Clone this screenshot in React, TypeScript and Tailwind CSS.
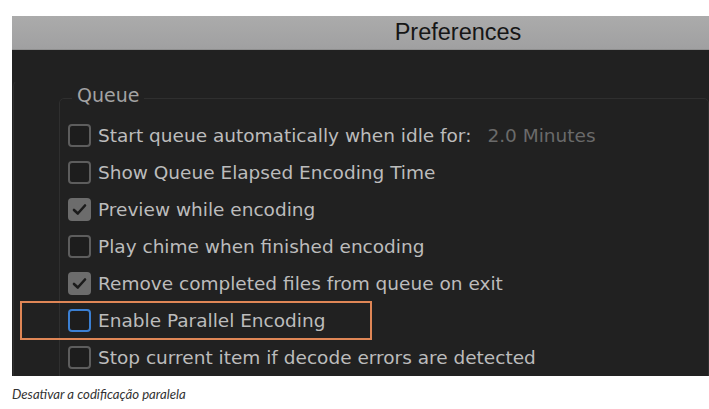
const rows = [
  { label: 'Start queue automatically when idle for:', state: 'off', extra: '2.0 Minutes' },
  { label: 'Show Queue Elapsed Encoding Time', state: 'off' },
  { label: 'Preview while encoding', state: 'on' },
  { label: 'Play chime when finished encoding', state: 'off' },
  { label: 'Remove completed files from queue on exit', state: 'on' },
  { label: 'Enable Parallel Encoding', state: 'focus' },
  { label: 'Stop current item if decode errors are detected', state: 'off' },
];

const CheckBox = ({ state }: { state: string }) => {
  if (state === 'on') {
    return (
      <div className="w-[23px] h-[23px] rounded-[4px] bg-[#6c6c6c] flex items-center justify-center shrink-0">
        <svg width="15" height="13" viewBox="0 0 15 13">
          <path d="M2 7 L5.8 10.5 L13 2.5" fill="none" stroke="#1b1b1b" strokeWidth="2.6" strokeLinecap="round" strokeLinejoin="round" />
        </svg>
      </div>
    );
  }
  return (
    <div
      className={
        state === 'focus'
          ? 'w-[23px] h-[23px] rounded-[4px] border-[2.5px] border-[#3b7fd2] bg-[#1d1d1d] shrink-0'
          : 'w-[23px] h-[23px] rounded-[4px] border-[2.5px] border-[#5d5d5d] bg-[#1d1d1d] shrink-0'
      }
    />
  );
};

export default function App() {
  return (
    <div className="w-[709px] h-[409px] bg-white relative overflow-hidden">
      <div className="pt-[16px] pl-[12px]">
        {/* window */}
        <div className="h-[34px] bg-gradient-to-b from-[#ababab] to-[#a0a0a1] border-b border-[#8f8f8f] flex items-center justify-center">
          <span className="pl-[195px] text-[23.5px] text-[#161616]" style={{ fontFamily: '"Liberation Sans", Arial, sans-serif' }}>
            Preferences
          </span>
        </div>
        <div className="h-[326px] bg-[#212121] overflow-hidden" style={{ fontFamily: '"DejaVu Sans", "Lucida Grande", sans-serif' }}>
          <div className="ml-[1px] mt-[30px] h-[300px] border-l border-t border-[#2d2d2d] border-t-transparent rounded-tl-[6px] pl-[45px]">
            <fieldset className="mt-[4px] border border-[#2f2f2f] rounded-[5px] pl-[8px] pt-[6px] h-[320px]">
              <legend className="ml-[4px] px-[5px] pb-[6px] text-[19px] text-[#a3a3a3] leading-[20px]">Queue</legend>
              {rows.map((r) => (
                <div key={r.label} className="h-[37px] flex items-center gap-[7px]">
                  <CheckBox state={r.state} />
                  <span className="text-[18.5px] text-[#bcbcbc] whitespace-nowrap">{r.label}</span>
                  {r.extra && <span className="ml-[9px] text-[18.5px] text-[#6a6a6a] whitespace-nowrap">{r.extra}</span>}
                </div>
              ))}
            </fieldset>
          </div>
        </div>
        <p className="mt-[9px] text-[13.2px] italic text-[#333333]" style={{ fontFamily: 'Lato, "Open Sans", sans-serif' }}>
          Desativar a codificação paralela
        </p>
      </div>
      {/* highlight annotation */}
      <div className="absolute left-[20px] top-[301px] w-[352px] h-[39px] border-2 border-[#df8656]" />
    </div>
  );
}
